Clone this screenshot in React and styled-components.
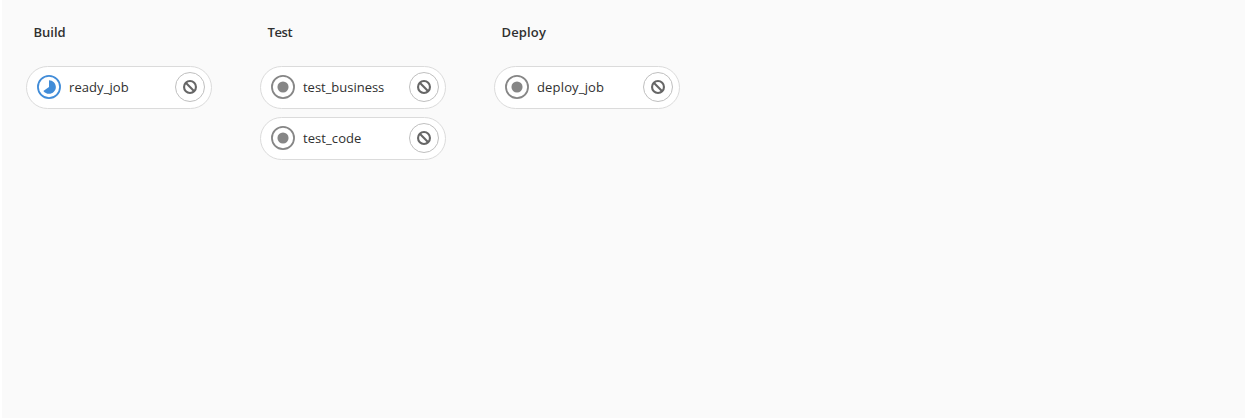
import React from "react";
import styled, { createGlobalStyle } from "styled-components";

const GlobalStyle = createGlobalStyle`
  * { box-sizing: border-box; }
  body {
    margin: 0;
    background: #fff;
    color: #303030;
    font-family: "Segoe UI", "Open Sans", "Noto Sans", sans-serif;
  }
`;

const Graph = styled.main`
  display: flex;
  gap: 48px;
  min-height: 100vh;
  margin-left: 2px;
  padding: 22px 24px 0;
  background: #fafafa;
`;

const Stage = styled.section`
  width: 186px;
`;

const StageTitle = styled.h2`
  margin: 0 0 24px 7.5px;
  font-size: 13px;
  font-weight: 600;
  line-height: 20px;
  letter-spacing: ${(p) => p.$tracking}px;
`;

const JobList = styled.ul`
  display: flex;
  flex-direction: column;
  gap: 8px;
  margin: 0;
  padding: 0;
  list-style: none;
`;

const Job = styled.li`
  display: flex;
  align-items: center;
  height: 43px;
  padding: 0 6px 1px 10px;
  border: 1px solid #dbdbdb;
  border-radius: 22px;
  background: #fff;
`;

const StatusIcon = styled.svg`
  flex: none;
  width: 24px;
  height: 24px;
  color: ${(p) => (p.$running ? "#418cd8" : "#868686")};
`;

const JobName = styled.span`
  flex: 1;
  margin-left: 8px;
  font-size: 13px;
  line-height: 20px;
  letter-spacing: ${(p) => p.$tracking}px;
  white-space: nowrap;
`;

const CancelButton = styled.button`
  display: flex;
  flex: none;
  align-items: center;
  justify-content: center;
  width: 30px;
  height: 30px;
  padding: 0;
  border: 1px solid #bfbfbf;
  border-radius: 50%;
  background: #fff;
  color: #666;
`;

const stages = [
  { title: "Build", tracking: 0, jobs: [{ name: "ready_job", running: true, tracking: 0.08 }] },
  {
    title: "Test",
    tracking: -0.4,
    jobs: [
      { name: "test_business", tracking: -0.02 },
      { name: "test_code", tracking: 0.08 },
    ],
  },
  { title: "Deploy", tracking: 0.15, jobs: [{ name: "deploy_job", tracking: 0.16 }] },
];

function Status({ running }) {
  return (
    <StatusIcon viewBox="0 0 14 14" $running={running} aria-hidden="true">
      <circle cx="7" cy="7" r="6.45" fill="none" stroke="currentColor" strokeWidth="1.05" />
      {running ? (
        <path fill="currentColor" d="M7 3c2.2 0 4 1.8 4 4s-1.8 4-4 4c-1.3 0-2.5-.7-3.3-1.7L7 7V3" />
      ) : (
        <circle cx="7" cy="7" r="3.25" fill="currentColor" />
      )}
    </StatusIcon>
  );
}

function CancelIcon() {
  return (
    <svg width="14" height="14" viewBox="0 0 14 14" fill="none" stroke="currentColor" strokeWidth="2.1" aria-hidden="true">
      <circle cx="7" cy="7" r="5.95" />
      <path d="M2.8 2.8l8.4 8.4" />
    </svg>
  );
}

export default function App() {
  return (
    <>
      <GlobalStyle />
      <Graph>
        {stages.map((stage) => (
          <Stage key={stage.title}>
            <StageTitle $tracking={stage.tracking}>{stage.title}</StageTitle>
            <JobList>
              {stage.jobs.map((job) => (
                <Job key={job.name}>
                  <Status running={job.running} />
                  <JobName $tracking={job.tracking}>{job.name}</JobName>
                  <CancelButton aria-label={`Cancel ${job.name}`}>
                    <CancelIcon />
                  </CancelButton>
                </Job>
              ))}
            </JobList>
          </Stage>
        ))}
      </Graph>
    </>
  );
}
